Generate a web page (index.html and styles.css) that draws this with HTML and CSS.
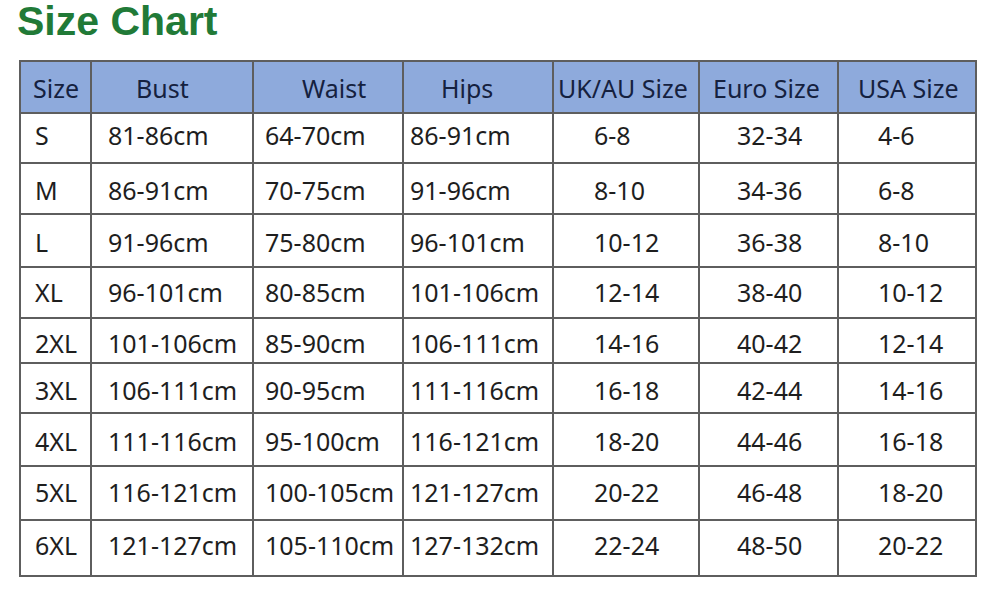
FILE: index.html
```html
<!DOCTYPE html>
<html>
<head>
<meta charset="utf-8">
<link rel="stylesheet" href="styles.css">
</head>
<body>
<div class="page">
  <h1 class="title">Size Chart</h1>
  <table class="chart">
    <colgroup>
      <col class="c1"><col class="c2"><col class="c3"><col class="c4"><col class="c5"><col class="c6"><col class="c7">
    </colgroup>
    <thead>
      <tr class="head">
        <th class="h1">Size</th><th class="h2">Bust</th><th class="h3">Waist</th><th class="h4">Hips</th><th class="h5">UK/AU Size</th><th class="h6">Euro Size</th><th class="h7">USA Size</th>
      </tr>
    </thead>
    <tbody>
      <tr class="r1"><td class="d1">S</td><td class="d2">81-86cm</td><td class="d3">64-70cm</td><td class="d4">86-91cm</td><td class="d5">6-8</td><td class="d6">32-34</td><td class="d7">4-6</td></tr>
      <tr class="r2"><td class="d1">M</td><td class="d2">86-91cm</td><td class="d3">70-75cm</td><td class="d4">91-96cm</td><td class="d5">8-10</td><td class="d6">34-36</td><td class="d7">6-8</td></tr>
      <tr class="r3"><td class="d1">L</td><td class="d2">91-96cm</td><td class="d3">75-80cm</td><td class="d4">96-101cm</td><td class="d5">10-12</td><td class="d6">36-38</td><td class="d7">8-10</td></tr>
      <tr class="r4"><td class="d1">XL</td><td class="d2">96-101cm</td><td class="d3">80-85cm</td><td class="d4">101-106cm</td><td class="d5">12-14</td><td class="d6">38-40</td><td class="d7">10-12</td></tr>
      <tr class="r5"><td class="d1">2XL</td><td class="d2">101-106cm</td><td class="d3">85-90cm</td><td class="d4">106-111cm</td><td class="d5">14-16</td><td class="d6">40-42</td><td class="d7">12-14</td></tr>
      <tr class="r6"><td class="d1">3XL</td><td class="d2">106-111cm</td><td class="d3">90-95cm</td><td class="d4">111-116cm</td><td class="d5">16-18</td><td class="d6">42-44</td><td class="d7">14-16</td></tr>
      <tr class="r7"><td class="d1">4XL</td><td class="d2">111-116cm</td><td class="d3">95-100cm</td><td class="d4">116-121cm</td><td class="d5">18-20</td><td class="d6">44-46</td><td class="d7">16-18</td></tr>
      <tr class="r8"><td class="d1">5XL</td><td class="d2">116-121cm</td><td class="d3">100-105cm</td><td class="d4">121-127cm</td><td class="d5">20-22</td><td class="d6">46-48</td><td class="d7">18-20</td></tr>
      <tr class="r9"><td class="d1">6XL</td><td class="d2">121-127cm</td><td class="d3">105-110cm</td><td class="d4">127-132cm</td><td class="d5">22-24</td><td class="d6">48-50</td><td class="d7">20-22</td></tr>
    </tbody>
  </table>
</div>
</body>
</html>
```

FILE: styles.css
```css
html, body {
  margin: 0;
  padding: 0;
  background: #ffffff;
}

.page {
  width: 1000px;
  height: 594px;
  padding: 1px 0 0 19px;
  box-sizing: border-box;
}

.title {
  margin: 0 0 0 -2px;
  font-family: "Liberation Sans", Arial, sans-serif;
  font-weight: bold;
  font-size: 41px;
  line-height: 41px;
  color: #217a37;
}

.chart {
  margin-top: 18px;
  border-collapse: collapse;
  table-layout: fixed;
  width: 958px;
  font-family: "Noto Sans", "Open Sans", sans-serif;
  font-size: 25px;
  line-height: 30px;
  color: #1e1e1e;
  border: 2px solid #5e5e5e;
}

.chart th, .chart td {
  border: 2px solid #5e5e5e;
  padding: 0;
  text-align: left;
  white-space: nowrap;
  vertical-align: middle;
  font-weight: normal;
}

.c1 { width: 71px; }
.c2 { width: 162px; }
.c3 { width: 150px; }
.c4 { width: 150px; }
.c5 { width: 146px; }
.c6 { width: 139px; }
.c7 { width: 138px; }

.head { height: 52px; }

.chart .head th {
  background: #8eaadc;
  color: #15213f;
  padding-top: 1px;
}

.chart .h1 { padding-left: 12px; }
.chart .h2 { padding-left: 44px; }
.chart .h3 { padding-left: 48px; }
.chart .h4 { padding-left: 37px; }
.chart .h5 { padding-left: 4px; }
.chart .h6 { padding-left: 13px; }
.chart .h7 { padding-left: 19px; }

.chart .d1 { padding-left: 14px; }
.chart .d2 { padding-left: 16px; }
.chart .d3 { padding-left: 11px; }
.chart .d4 { padding-left: 6px; }
.chart .d5 { padding-left: 40px; }
.chart .d6 { padding-left: 37px; }
.chart .d7 { padding-left: 39px; }

.r1 { height: 50px; }
.r2 { height: 51px; }
.r3 { height: 53px; }
.r4 { height: 51px; }
.r5 { height: 45px; }
.r6 { height: 50px; }
.r7 { height: 53px; }
.r8 { height: 54px; }
.r9 { height: 56px; }

.r1 td { padding-bottom: 7px; }
.r2 td { padding-top: 2px; }
.r3 td { padding-top: 2px; }
.r4 td { padding-bottom: 2px; }
.r5 td { padding-top: 4px; }
.r6 td { padding-top: 4px; }
.r7 td { padding-top: 2px; }
.r8 td { padding-bottom: 2px; }
.r9 td { padding-bottom: 6px; }
```
